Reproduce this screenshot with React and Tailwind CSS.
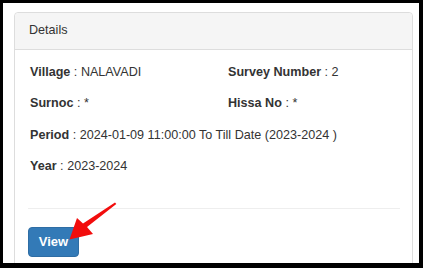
import React from 'react';

const Field = ({ label, value, className = '' }) => (
  <div className={className}>
    <span className="font-bold">{label}</span> : {value}
  </div>
);

export default function App() {
  return (
    <div className="relative w-[423px] h-[268px] bg-black pt-[3px] pl-[3px] pr-[4px] pb-[5px] overflow-hidden font-['Liberation_Sans',Arial,sans-serif] text-[12.6px] leading-[20px] text-[#333]">
      <div className="h-full bg-white pt-[9px] pl-[11px] pr-[6px] overflow-hidden">
        {/* panel */}
        <div className="border border-[#ddd] rounded-t-[4px] h-[260px]">
          <div className="bg-[#f5f5f5] border-b border-[#ddd] h-[37px] pl-[14px] pt-[7px] rounded-t-[4px]">
            Details
          </div>
          <div className="pl-[13px] pr-[12px] pt-[12px]">
            <div className="pl-[2px]">
              <div className="flex h-[31px]">
                <Field label="Village" value="NALAVADI" className="w-[198px]" />
                <Field label="Survey Number" value="2" />
              </div>
              <div className="flex h-[32px]">
                <Field label="Surnoc" value="*" className="w-[198px]" />
                <Field label="Hissa No" value="*" />
              </div>
              <div className="h-[31px]">
                <Field label="Period" value="2024-01-09 11:00:00 To Till Date (2023-2024 )" />
              </div>
              <div className="h-[31px]">
                <Field label="Year" value="2023-2024" />
              </div>
            </div>
            <div className="mt-[21px] border-t border-[#eee]" />
            <div className="pt-[18px]">
              <button className="w-[51px] h-[30px] bg-[#337ab7] border border-[#2e6da4] rounded-[4px] text-white font-bold text-[13px]">
                View
              </button>
            </div>
          </div>
        </div>
      </div>

      {/* red annotation arrow */}
      <svg className="absolute left-0 top-0" width="423" height="268" viewBox="0 0 423 268">
        <path
          d="M115 202.5 L116.3 204 L87 227 L93 234 L69.5 239.5 L77 218 L83 223.5 Z"
          fill="#f20d0d"
        />
      </svg>
    </div>
  );
}
